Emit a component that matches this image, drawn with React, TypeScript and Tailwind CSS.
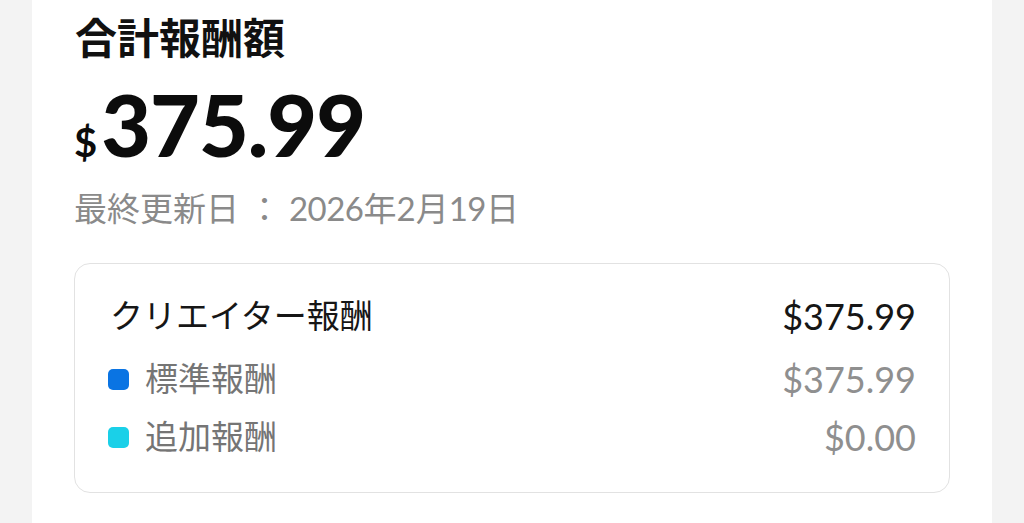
import React from "react";

const font = { fontFamily: '"Lato", "Noto Sans CJK JP", sans-serif' };

export default function App() {
  return (
    <div
      className="w-full h-[523px] bg-[#f3f3f3] flex px-[32px] overflow-hidden"
      style={font}
    >
      <div className="flex-1 bg-white px-[42px] pt-[13px] flex flex-col">
        <div className="text-[42px] leading-[50px] font-bold text-[#111] ml-[1px]">
          合計報酬額
        </div>
        <div className="flex items-baseline mt-[18px] text-[#0c0c0c] h-[80px]">
          <span className="text-[40px] font-bold leading-none mr-[4px]">$</span>
          <span className="text-[86px] font-black leading-none tracking-[-1px]">
            375.99
          </span>
        </div>
        <div className="mt-[25px] text-[33px] leading-[44px] text-[#8a8a8a] whitespace-pre">
          最終更新日<span className="ml-[9px]">：</span>
          <span className="tracking-[-0.5px]"> 2026</span>年<span>2</span>月
          <span className="tracking-[-0.5px]">19</span>日
        </div>
        <div className="mt-[33px] border-[1.5px] border-[#e2e2e2] rounded-[16px] pt-[23px] pb-[26px] px-[33px] flex flex-col">
          <div className="flex items-center justify-between h-[58px] text-[33px] text-[#161616]">
            <span className="ml-[2px]">クリエイター報酬</span>
            <span className="text-[36px]">$375.99</span>
          </div>
          <div className="flex items-center justify-between h-[58px] mt-[5px] text-[33px]">
            <div className="flex items-center">
              <span className="w-[21px] h-[21px] rounded-[5px] bg-[#0a74e3] mr-[16px]" />
              <span className="text-[#757575]">標準報酬</span>
            </div>
            <span className="text-[36px] text-[#8f8f8f]">$375.99</span>
          </div>
          <div className="flex items-center justify-between h-[58px] text-[33px]">
            <div className="flex items-center">
              <span className="w-[21px] h-[21px] rounded-[5px] bg-[#1ad0e8] mr-[16px]" />
              <span className="text-[#757575]">追加報酬</span>
            </div>
            <span className="text-[36px] text-[#8f8f8f]">$0.00</span>
          </div>
        </div>
      </div>
    </div>
  );
}
